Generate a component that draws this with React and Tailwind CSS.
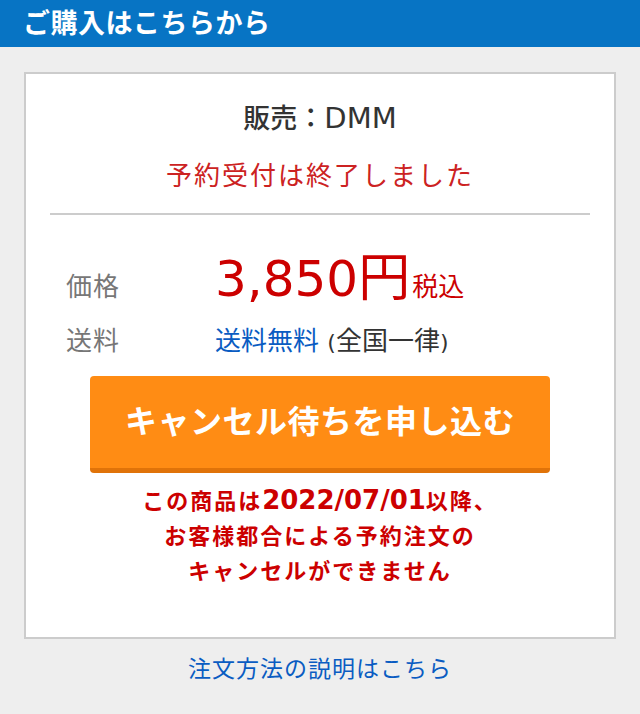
import React from 'react';

const font = "font-['DejaVu_Sans','Noto_Sans_CJK_JP',sans-serif]";

const App = () => {
    return (
        <div className={`min-h-[714px] bg-[#eeeeee] ${font}`}>
            {/* Header bar */}
            <div className="h-[47px] bg-[#0774c4] flex items-center px-[23px]">
                <h2 className="text-white text-[27px] font-bold leading-none tracking-[0.5px]">ご購入はこちらから</h2>
            </div>

            <div className="px-6 pt-[25px]">
                {/* Purchase card */}
                <div className="bg-white border-2 border-[#cccccc] px-6 pt-[24px] pb-[48px]">
                    <div className="text-center text-[27px] font-medium text-[#333333] leading-[40px]">
                        販売：<span className="text-[29px] font-normal">DMM</span>
                    </div>
                    <div className="text-center text-[26px] tracking-[2px] text-[#cc2222] leading-[40px] mt-[17px]">予約受付は終了しました</div>

                    <hr className="border-0 border-t-2 border-[#cccccc] mt-[17px]" />

                    <div className="pl-4">
                        <div className="flex items-baseline mt-[35px] h-[56px]">
                            <span className="w-[149px] text-[26px] tracking-[1px] text-[#777777]">価格</span>
                            <span className="text-[50px] leading-[56px] text-[#cc0000]">
                                3,850<span className="text-[52px]">円</span>
                            </span>
                            <span className="text-[26px] text-[#cc0000] ml-[2px]">税込</span>
                        </div>
                        <div className="flex items-center mt-[17px] h-[36px]">
                            <span className="w-[149px] text-[26px] tracking-[1px] text-[#777777]">送料</span>
                            <span className="text-[26px] text-[#333333]">
                                <a className="text-[#0a5cc2]">送料無料</a> <span className="text-[22px]">(</span>全国一律<span className="text-[22px]">)</span>
                            </span>
                        </div>
                    </div>

                    <div className="flex justify-center mt-[17px]">
                        <button className="w-[460px] h-[97px] bg-[#ff8c14] border-b-[5px] border-[#e07309] rounded-[4px] text-white text-[32px] font-bold tracking-[0.5px]">
                            キャンセル待ちを申し込む
                        </button>
                    </div>

                    <p className="text-center text-[#cc0000] text-[22px] tracking-[2px] font-bold leading-[35px] mt-[10px]">
                        この商品は<span className="text-[26px] tracking-normal">2022/07/01</span>以降、<br />
                        お客様都合による予約注文の<br />
                        キャンセルができません
                    </p>
                </div>

                <div className="text-center mt-[14px] leading-[32px]">
                    <a className="text-[#0a5cc2] text-[23px] tracking-[1px]">注文方法の説明はこちら</a>
                </div>
            </div>
        </div>
    );
};

export default App;
